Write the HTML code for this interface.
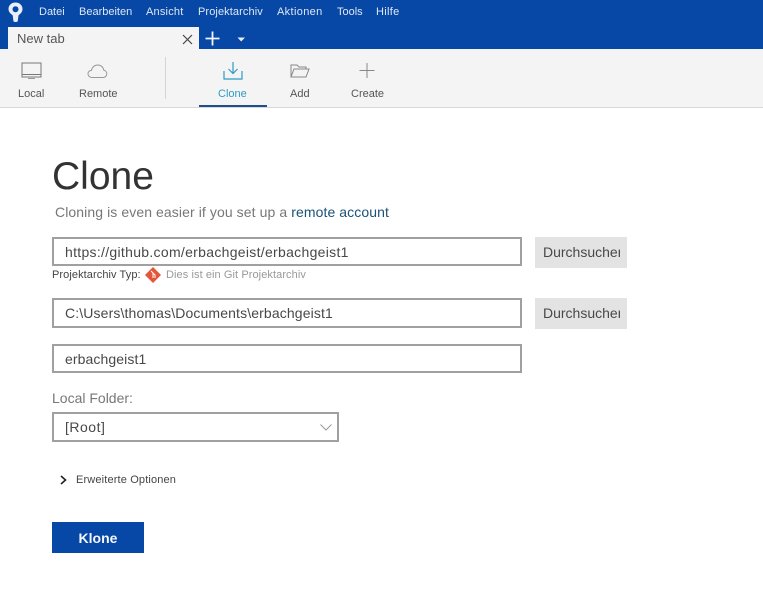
<!DOCTYPE html>
<html><head><meta charset="utf-8"><style>
html,body{margin:0;padding:0;width:763px;height:600px;overflow:hidden;background:#fff;font-family:"Liberation Sans",sans-serif;color:#333}
div,span,a{position:absolute;white-space:nowrap;box-sizing:border-box}
svg{position:absolute;overflow:visible}
.m{top:6px;font-size:11px;line-height:13px;color:#dfe8f5}
.t{top:87px;font-size:11px;line-height:14px;color:#555;text-align:center}
.in{left:52px;width:470px;background:#fff;border:2px solid #a0a0a0}
.v{left:65px;font-size:14px;line-height:18px;color:#484848}
.b{left:535px;width:92px;height:31px;background:#e3e3e3}
.b span{left:8px;top:0;width:77px;overflow:hidden;color:#484848;font-size:14px;line-height:31px}
</style></head><body>
<div style="left:0;top:0;width:763px;height:49px;background:#0747a6"></div>
<svg style="left:7px;top:2px" width="18" height="20" viewBox="0 0 18 20"><path d="M8.5 0.5C4.2 0.5 1.5 3.5 1.5 7c0 3.6 3 5.2 4.2 6.4L6.5 19.5c1.4.6 2.8.6 4.2 0l.8-6.1c1.2-1.2 4-2.8 4-6.4 0-3.5-2.7-6.5-7-6.5z" fill="#e8eff8"/><circle cx="8.5" cy="7.3" r="3" fill="#0747a6"/></svg>
<span class="m" style="left:39px">Datei</span>
<span class="m" style="left:79px">Bearbeiten</span>
<span class="m" style="left:146px;letter-spacing:.2px">Ansicht</span>
<span class="m" style="left:198px;letter-spacing:.1px">Projektarchiv</span>
<span class="m" style="left:277px;letter-spacing:.35px">Aktionen</span>
<span class="m" style="left:337px">Tools</span>
<span class="m" style="left:376px;letter-spacing:.3px">Hilfe</span>
<div style="left:8px;top:27px;width:191px;height:22px;background:#f4f4f4"></div>
<span style="left:17px;top:31px;font-size:13px;line-height:16px;color:#555">New tab</span>
<svg style="left:182px;top:34px" width="11" height="11"><path d="M1 1L10 10M10 1L1 10" stroke="#444" stroke-width="1.2" fill="none"/></svg>
<svg style="left:205px;top:31px" width="15" height="15"><path d="M7.5 0.5V14.5M0.5 7.5H14.5" stroke="#f2f5fb" stroke-width="1.8" fill="none"/></svg>
<svg style="left:237px;top:37px" width="9" height="5"><path d="M0.5 0.5H8L4.2 4.5z" fill="#e4ecf7"/></svg>
<div style="left:0;top:49px;width:763px;height:59px;background:#f4f4f4;border-bottom:1px solid #d8d8d8"></div>
<div style="left:165px;top:57px;width:1px;height:42px;background:#d5d5d5"></div>
<svg style="left:21px;top:62px" width="21" height="18" fill="none"><rect x="1" y="1" width="19" height="14" stroke="#777"/><path d="M1 12.5H20" stroke="#777"/><path d="M7 16.5H14" stroke="#999"/></svg>
<svg style="left:87px;top:64px" width="21" height="15" fill="none"><path d="M5 13.5C2.5 13.5 1 11.8 1 9.8 1 7.8 2.5 6.4 4.4 6.4 5 3.2 7.6 1 10.8 1c3.2 0 5.6 2.2 6 5.2 1.6.4 3 1.8 3 3.6 0 2.2-1.700 3.700-3.800 3.700z" stroke="#999"/></svg>
<svg style="left:223px;top:61px" width="20" height="19" fill="none"><path d="M10 1V12M5.500 8L10 12.500 14.500 8" stroke="#2f9bc4" stroke-width="1.200"/><path d="M1 10V18H19V10" stroke="#2f9bc4" stroke-width="1.200"/></svg>
<svg style="left:290px;top:64px" width="20" height="14" fill="none"><path d="M1 13V1H7L9 3H16V5M1 13L4 5H19L16 13z" stroke="#888"/></svg>
<svg style="left:359px;top:63px" width="16" height="16"><path d="M8 0V15M0.500 7.500H15.500" stroke="#888" fill="none"/></svg>
<span class="t" style="left:18px">Local</span>
<span class="t" style="left:79px">Remote</span>
<span class="t" style="left:218px;color:#2f9bc4">Clone</span>
<span class="t" style="left:290px">Add</span>
<span class="t" style="left:351px">Create</span>
<div style="left:199px;top:105px;width:68px;height:2px;background:#1f4e8c"></div>
<span style="left:52px;top:153px;font-size:39px;line-height:48px;color:#333">Clone</span>
<span style="left:55px;top:204px;font-size:14px;line-height:17px;color:#777;letter-spacing:.09px">Cloning is even easier if you set up a <span style="position:static;color:#1a5276">remote account</span></span>
<div class="in" style="top:237px;height:29px"></div>
<span class="v" style="top:243px;letter-spacing:.3px">https://github.com/erbachgeist/erbachgeist1</span>
<div class="b" style="top:237px"><span>Durchsuchen</span></div>
<span style="left:52px;top:269px;font-size:11px;line-height:13px;color:#444;letter-spacing:.08px">Projektarchiv Typ:</span>
<svg style="left:145px;top:267px" width="16" height="16"><path d="M8 0L16 8 8 16 0 8z" fill="#e2573a"/><path d="M6 4L10 8V11M8 6V11" stroke="#fff" fill="none"/></svg>
<span style="left:166px;top:269px;font-size:11px;line-height:13px;color:#999;letter-spacing:.08px">Dies ist ein Git Projektarchiv</span>
<div class="in" style="top:298px;height:30px"></div>
<span class="v" style="top:304px;letter-spacing:.13px">C:\Users\thomas\Documents\erbachgeist1</span>
<div class="b" style="top:298px"><span>Durchsuchen</span></div>
<div class="in" style="top:344px;height:29px"></div>
<span class="v" style="top:350px;letter-spacing:.1px">erbachgeist1</span>
<span style="left:52px;top:390px;font-size:14px;line-height:17px;color:#777">Local Folder:</span>
<div class="in" style="top:412px;width:287px;height:30px"></div>
<span class="v" style="top:418px;letter-spacing:.5px">[Root]</span>
<svg style="left:320px;top:424px" width="12" height="7"><path d="M0.500 0.500L6 6 11.500 0.500" stroke="#999" fill="none"/></svg>
<svg style="left:60px;top:475px" width="7" height="10"><path d="M1 1L5.500 5 1 9" stroke="#222" stroke-width="1.600" fill="none"/></svg>
<span style="left:76px;top:473px;font-size:11px;line-height:14px;color:#444;letter-spacing:.15px">Erweiterte Optionen</span>
<div style="left:52px;top:522px;width:92px;height:31px;background:#0747a6;color:#f4f7fc;font-size:14px;font-weight:bold;line-height:33px;text-align:center">Klone</div>
</body></html>
